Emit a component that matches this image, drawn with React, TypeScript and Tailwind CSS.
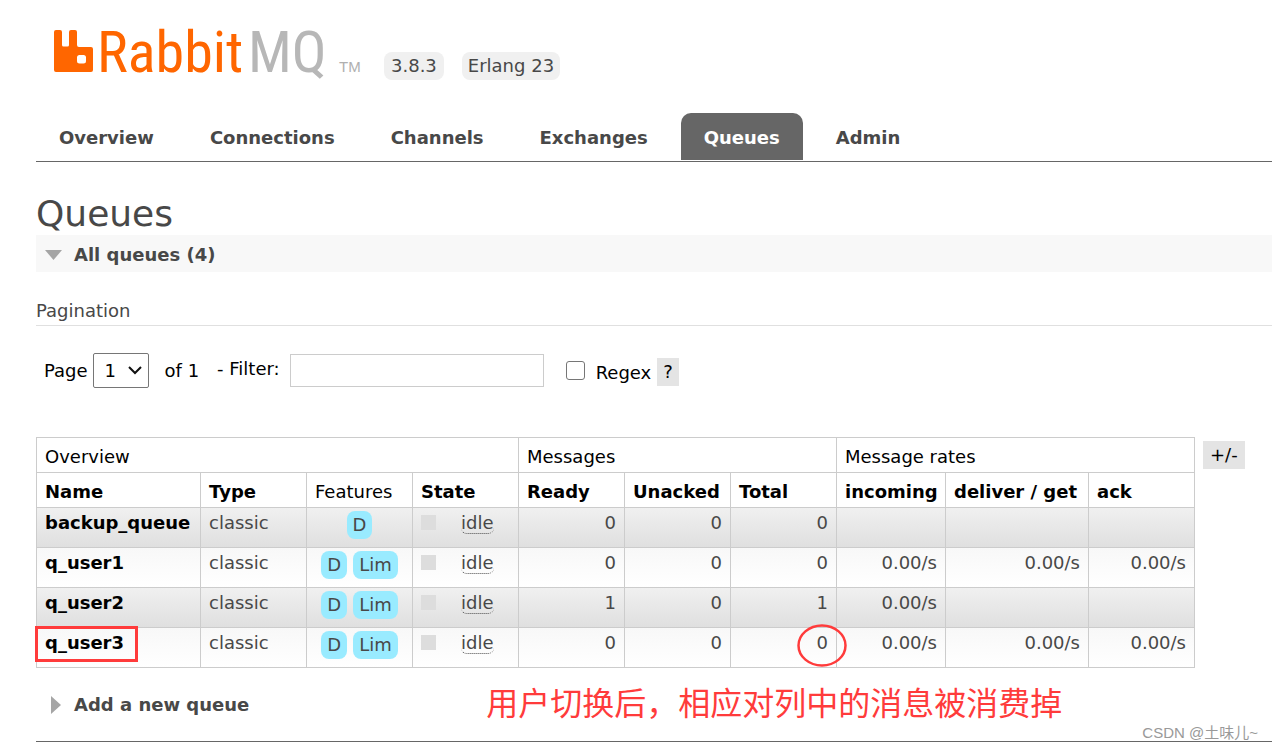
import React from "react";

type Queue = {
  name: string;
  features: string[];
  ready: number;
  unacked: number;
  total: number;
  incoming: string;
  deliver: string;
  ack: string;
  boxed?: boolean;
};

const queues: Queue[] = [
  { name: "backup_queue", features: ["D"], ready: 0, unacked: 0, total: 0, incoming: "", deliver: "", ack: "" },
  { name: "q_user1", features: ["D", "Lim"], ready: 0, unacked: 0, total: 0, incoming: "0.00/s", deliver: "0.00/s", ack: "0.00/s" },
  { name: "q_user2", features: ["D", "Lim"], ready: 1, unacked: 0, total: 1, incoming: "0.00/s", deliver: "", ack: "" },
  { name: "q_user3", features: ["D", "Lim"], ready: 0, unacked: 0, total: 0, incoming: "0.00/s", deliver: "0.00/s", ack: "0.00/s", boxed: true },
];

const tabs = ["Overview", "Connections", "Channels", "Exchanges", "Queues", "Admin"];

function Logo() {
  return (
    <a href="#" aria-label="RabbitMQ" className="block">
      <svg width="312" height="74" viewBox="0 -16 312 74" className="block overflow-visible">
        <path
          fill="#ff6600"
          d="M2 4h4q2 0 2 2v13q0 1.500 1.500 1.500h4q1.500 0 1.500-1.500V6q0-2 2-2h4q2 0 2 2v13q0 2 2 2h12q2 0 2 2v21q0 2-2 2H2q-2 0-2-2V6q0-2 2-2zM25.500 29q-2.500 0-2.500 2.500v3.500q0 2.500 2.500 2.500h4q2.500 0 2.500-2.500v-3.500q0-2.500-2.500-2.500z"
        />
        <text x="43" y="46" fontSize="58" fill="#ff6600" className="font-['Roboto_Condensed','Roboto',sans-serif]">
          Rabbit
        </text>
        <text x="194" y="46" fontSize="58" fill="#b7b7b7" className="font-['Roboto_Condensed','Roboto',sans-serif]">
          MQ
        </text>
        <text x="285" y="46" fontSize="15" fill="#b0b0b0" className="font-['Liberation_Sans',sans-serif]">
          TM
        </text>
      </svg>
    </a>
  );
}

function Feature({ label }: { label: string }) {
  return <span className="rounded-lg bg-[#99ebff] px-[6px] leading-7">{label}</span>;
}

function Rate({ value }: { value: string | number }) {
  return <td className="border border-[#ccc] px-2 pt-1 text-right align-top">{value}</td>;
}

const head = "border border-[#ccc] px-2 text-left";

export default function App() {
  return (
    <div className="relative overflow-x-clip bg-white pl-9 font-['DejaVu_Sans',Verdana,sans-serif] text-[18px] leading-[22px] text-[#484848]">
      <header className="flex items-start gap-[18px] pl-[18px] pt-[10px]">
        <Logo />
        <span className="mt-[42px] rounded-lg bg-[#f0f0f0] px-[7px] leading-7">3.8.3</span>
        <span className="mt-[42px] rounded-lg bg-[#f0f0f0] px-[6px] leading-7">Erlang 23</span>
      </header>

      <nav className="mt-[29px] border-b border-[#666] pb-px">
        <ul className="flex gap-[10px]">
          {tabs.map((tab) => (
            <li key={tab}>
              <a
                href="#"
                className={
                  tab === "Queues"
                    ? "block rounded-t-[10px] bg-[#666] px-[23px] pb-[11px] pt-[13px] font-bold leading-[23px] text-white"
                    : "block px-[23px] pb-[11px] pt-[13px] font-bold leading-[23px]"
                }
              >
                {tab}
              </a>
            </li>
          ))}
        </ul>
      </nav>

      <main>
        <h1 className="mt-[30px] text-[36px] leading-[43px]">Queues</h1>
        <h2 className="bg-[#f8f8f8] font-bold">
          <button type="button" className="flex h-[37px] items-center gap-3 pl-[9px] pt-[2px]">
            <svg width="17" height="10" viewBox="0 0 17 10">
              <path d="M0 0h17L8.500 10z" fill="#a5a5a5" />
            </svg>
            All queues (4)
          </button>
        </h2>
        <h3 className="mt-7 border-b border-[#e0e0e0] pb-[3px]">Pagination</h3>

        <form className="mt-[27px] flex items-center pl-2 text-black">
          <label htmlFor="page">Page</label>
          <span className="relative ml-[5px]">
            <select
              id="page"
              className="h-[35px] w-14 appearance-none rounded-[2px] border border-[#767676] bg-white pl-[11px]"
            >
              <option>1</option>
            </select>
            <svg width="14" height="9" viewBox="0 0 14 9" className="pointer-events-none absolute right-[7px] top-[13px]">
              <path d="M1 1l6 6 6-6" fill="none" stroke="#111" strokeWidth="2" />
            </svg>
          </span>
          <span className="ml-4">of 1</span>
          <label htmlFor="filter" className="ml-[18px] pb-1">
            - Filter:
          </label>
          <input id="filter" type="text" className="ml-[10px] h-[33px] w-[254px] border border-[#ccc] px-2" />
          <input
            id="regex"
            type="checkbox"
            className="ml-[22px] size-[19px] appearance-none rounded-[3px] border border-[#767676]"
          />
          <label htmlFor="regex" className="ml-[11px] pt-1">
            Regex
          </label>
          <button type="button" className="ml-[6px] mt-[2px] bg-[#e4e4e4] px-[6px] leading-7">
            ?
          </button>
        </form>

        <div className="mt-[49px] flex items-start gap-2">
          <table className="w-[1159px] table-fixed border-collapse">
            <colgroup>
              <col className="w-[164px]" />
              <col className="w-[106px]" />
              <col className="w-[106px]" />
              <col className="w-[106px]" />
              <col className="w-[106px]" />
              <col className="w-[106px]" />
              <col className="w-[106px]" />
              <col className="w-[109px]" />
              <col className="w-[143px]" />
              <col className="w-[106px]" />
            </colgroup>
            <thead className="text-black">
              <tr className="h-[35px]">
                <th colSpan={4} className={`${head} pt-[3px] font-normal`}>Overview</th>
                <th colSpan={3} className={`${head} pt-[3px] font-normal`}>Messages</th>
                <th colSpan={3} className={`${head} pt-[3px] font-normal`}>Message rates</th>
              </tr>
              <tr className="h-[35px] whitespace-nowrap">
                <th className={`${head} pt-[3px]`}>Name</th>
                <th className={`${head} pt-[3px]`}>Type</th>
                <th className={`${head} pt-[3px] font-normal`}>Features</th>
                <th className={`${head} pt-[3px]`}>State</th>
                <th className={`${head} pt-[3px]`}>Ready</th>
                <th className={`${head} pt-[3px]`}>Unacked</th>
                <th className={`${head} pt-[3px]`}>Total</th>
                <th className={`${head} pt-[3px]`}>incoming</th>
                <th className={`${head} pt-[3px]`}>deliver / get</th>
                <th className={`${head} pt-[3px]`}>ack</th>
              </tr>
            </thead>
            <tbody>
              {queues.map((q) => (
                <tr
                  key={q.name}
                  className="h-10 bg-linear-to-b odd:from-[#f0f0f0] odd:to-[#dfdfdf] even:from-[#f8f8f8] even:to-white"
                >
                  <td className="relative border border-[#ccc] px-2 pt-1 align-top font-bold text-black">
                    <a href="#">{q.name}</a>
                    {q.boxed && (
                      <span className="pointer-events-none absolute -left-[2px] -top-[2px] h-9 w-[103px] border-[3px] border-[#ff3b3b]" />
                    )}
                  </td>
                  <td className="border border-[#ccc] px-2 pt-1 align-top">classic</td>
                  <td className="border border-[#ccc] px-1 pt-[3px] align-top">
                    <span className="flex justify-center gap-[6px]">
                      {q.features.map((f) => (
                        <Feature key={f} label={f} />
                      ))}
                    </span>
                  </td>
                  <td className="border border-[#ccc] px-2 pt-1 align-top">
                    <span className="flex items-start gap-[25px]">
                      <span className="mt-[3px] size-[15px] bg-[#ddd]" />
                      <span className="rounded-[6px] border-b border-dotted border-[#484848] leading-[21px]">idle</span>
                    </span>
                  </td>
                  <Rate value={q.ready} />
                  <Rate value={q.unacked} />
                  <td className="relative border border-[#ccc] px-2 pt-1 text-right align-top">
                    {q.total}
                    {q.boxed && (
                      <svg
                        width="50"
                        height="43"
                        viewBox="0 0 50 43"
                        className="pointer-events-none absolute -right-[11px] -top-1 z-10"
                      >
                        <ellipse cx="25" cy="21.500" rx="23.500" ry="20" fill="none" stroke="#ff3b3b" strokeWidth="2.500" />
                      </svg>
                    )}
                  </td>
                  <Rate value={q.incoming} />
                  <Rate value={q.deliver} />
                  <Rate value={q.ack} />
                </tr>
              ))}
            </tbody>
          </table>
          <button type="button" className="mt-1 bg-[#e4e4e4] px-[7px] leading-7 text-black">
            +/-
          </button>
        </div>

        <section className="flex items-center border-b border-[#666] pb-[15px] pt-4">
          <h2 className="font-bold">
            <button type="button" className="flex items-center gap-[13px] pl-[15px]">
              <svg width="10" height="18" viewBox="0 0 10 18">
                <path d="M0 0v18l10-9z" fill="#a5a5a5" />
              </svg>
              Add a new queue
            </button>
          </h2>
          <p className="ml-[237px] whitespace-nowrap pb-2 font-['Noto_Sans_CJK_SC',sans-serif] text-[32px] leading-[34px] text-[#ff3b3b]">
            用户切换后，相应对列中的消息被消费掉
          </p>
        </section>
      </main>
      <span className="absolute bottom-[-1px] right-[14px] font-['Liberation_Sans','Noto_Sans_CJK_SC',sans-serif] text-[15px] leading-[20px] text-[#999]">
        CSDN @土味儿~
      </span>
    </div>
  );
}
